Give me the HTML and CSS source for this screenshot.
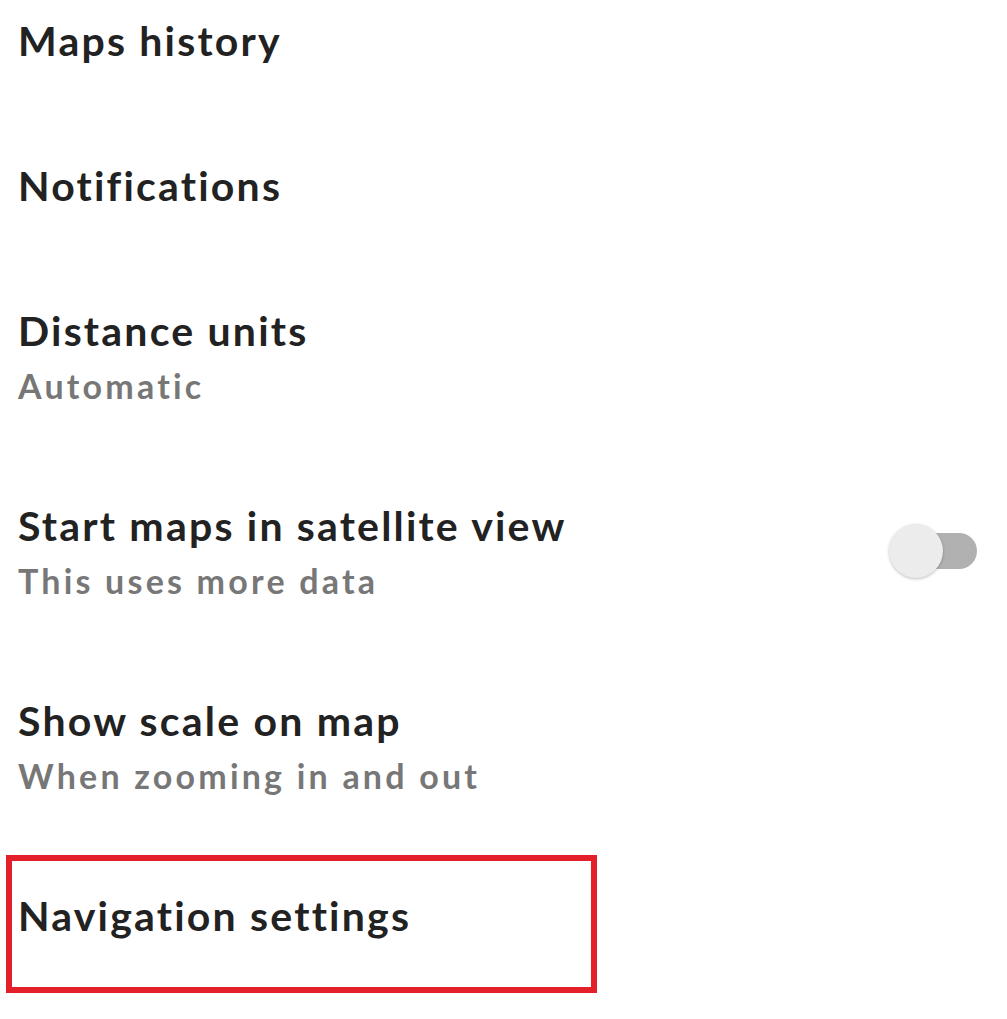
FILE: index.html
```html
<!DOCTYPE html>
<html>
<head>
<meta charset="utf-8">
<link rel="stylesheet" href="styles.css">
</head>
<body>
<div class="list">
  <div class="row first">
    <div class="text"><div class="title">Maps history</div></div>
  </div>
  <div class="row">
    <div class="text"><div class="title">Notifications</div></div>
  </div>
  <div class="row">
    <div class="text">
      <div class="title">Distance units</div>
      <div class="sub">Automatic</div>
    </div>
  </div>
  <div class="row">
    <div class="text">
      <div class="title">Start maps in satellite view</div>
      <div class="sub">This uses more data</div>
    </div>
    <div class="toggle"><span class="track"></span><span class="thumb"></span></div>
  </div>
  <div class="row">
    <div class="text">
      <div class="title">Show scale on map</div>
      <div class="sub">When zooming in and out</div>
    </div>
  </div>
  <div class="row highlighted">
    <div class="text"><div class="title">Navigation settings</div></div>
    <div class="highlight"></div>
  </div>
</div>
</body>
</html>
```
FILE: styles.css
```css
html, body {
  margin: 0;
  padding: 0;
  background: #ffffff;
}
body {
  width: 1007px;
  height: 1019px;
  overflow: hidden;
  font-family: Lato, "Noto Sans", sans-serif;
}
.list {
  display: flex;
  flex-direction: column;
}
.row {
  position: relative;
  display: flex;
  align-items: center;
  justify-content: space-between;
  padding: 47px 30px 47px 18px;
}
.row.first {
  padding-top: 15px;
}
.text {
  display: flex;
  flex-direction: column;
}
.title {
  font-size: 41px;
  line-height: 51px;
  font-weight: 700;
  letter-spacing: 2.2px;
  color: #222222;
  white-space: nowrap;
}
.sub {
  font-size: 34px;
  line-height: 40px;
  margin-top: 10px;
  font-weight: 700;
  letter-spacing: 3.2px;
  color: #777777;
  white-space: nowrap;
}
.toggle {
  position: relative;
  width: 88px;
  height: 54px;
  flex: none;
}
.track {
  position: absolute;
  right: 0;
  top: 9px;
  width: 80px;
  height: 36px;
  border-radius: 18px;
  background: #b1b1b1;
}
.thumb {
  position: absolute;
  left: 0;
  top: 0;
  width: 54px;
  height: 54px;
  border-radius: 50%;
  background: #ececec;
  box-shadow: 0 1px 3px rgba(0, 0, 0, 0.25);
}
.highlight {
  position: absolute;
  left: 6px;
  top: 12px;
  width: 579px;
  height: 126px;
  border: 6px solid #e3202a;
}
```
